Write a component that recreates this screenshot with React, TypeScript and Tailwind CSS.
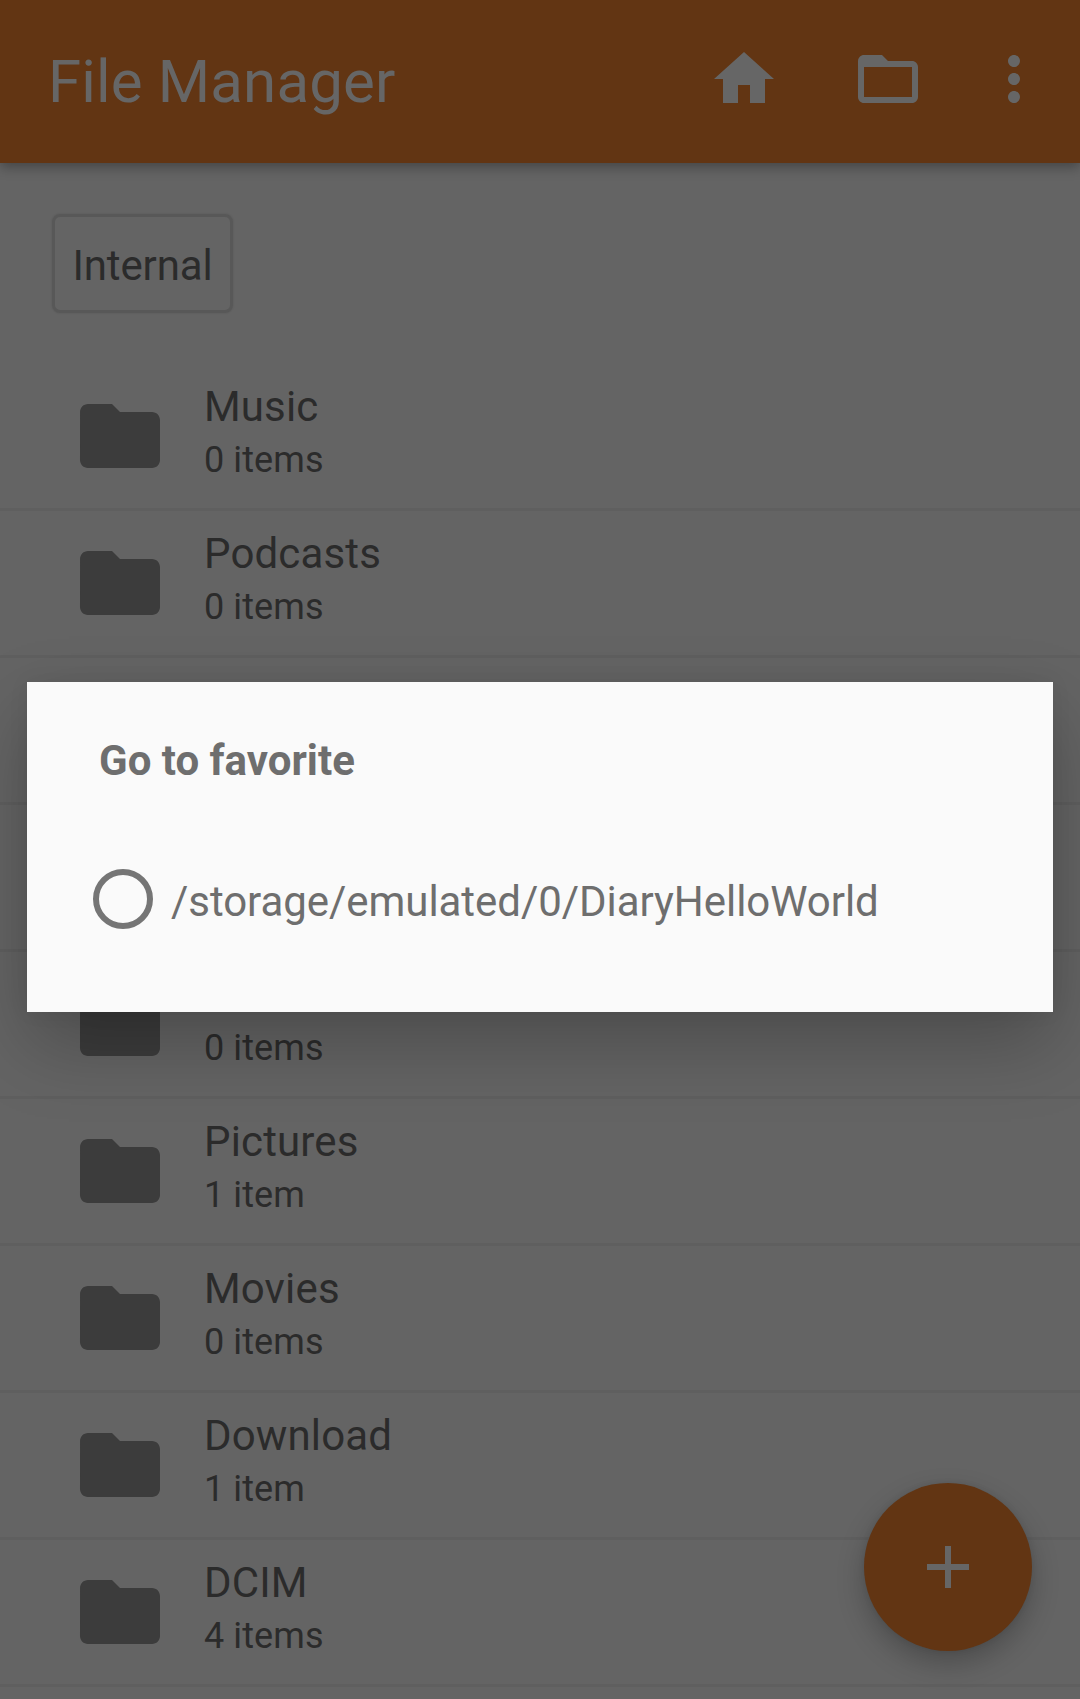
import React from "react";

type Row = { name: string; count: string };

const rows: Row[] = [
  { name: "Music", count: "0 items" },
  { name: "Podcasts", count: "0 items" },
  { name: "", count: "" },
  { name: "", count: "" },
  { name: "", count: "0 items" },
  { name: "Pictures", count: "1 item" },
  { name: "Movies", count: "0 items" },
  { name: "Download", count: "1 item" },
  { name: "DCIM", count: "4 items" },
];

function Icon({ d, className }: { d: string; className: string }) {
  return (
    <svg viewBox="0 0 24 24" fill="currentColor" className={className}>
      <path d={d} />
    </svg>
  );
}

const HOME = "M10 20v-6h4v6h5v-8h3L12 3 2 12h3v8z";
const FOLDER =
  "M10 4H4c-1.1 0-1.99.9-1.99 2L2 18c0 1.1.9 2 2 2h16c1.1 0 2-.9 2-2V8c0-1.1-.9-2-2-2h-8l-2-2z";
const FOLDER_OPEN =
  "M20 6h-8l-2-2H4c-1.1 0-1.99.9-1.99 2L2 18c0 1.1.9 2 2 2h16c1.1 0 2-.9 2-2V8c0-1.1-.9-2-2-2zm0 12H4V8h16v10z";
const MORE =
  "M12 8c1.1 0 2-.9 2-2s-.9-2-2-2-2 .9-2 2 .9 2 2 2zm0 2c-1.1 0-2 .9-2 2s.9 2 2 2 2-.9 2-2-.9-2-2-2zm0 6c-1.1 0-2 .9-2 2s.9 2 2 2 2-.9 2-2-.9-2-2-2z";
const PLUS = "M19 13h-6v6h-2v-6H5v-2h6V5h2v6h6v2z";

function Header() {
  return (
    <header className="relative flex h-[163px] shrink-0 items-start bg-[#623513] pl-12 pr-[30px] pt-[43px] text-[#666666] shadow-[0_4px_12px_rgba(0,0,0,0.32)]">
      <h1 className="mt-[4px] grow text-[60px] leading-[70px] tracking-[0.15px]">File Manager</h1>
      <Icon d={HOME} className="size-[72px]" />
      <Icon d={FOLDER_OPEN} className="ml-[72px] size-[72px]" />
      <Icon d={MORE} className="ml-[54px] size-[72px]" />
    </header>
  );
}

function FolderRow({ name, count }: Row) {
  return (
    <li className="flex h-[147px] shrink-0 items-start border-b-[3px] border-[#5f5f5f] pl-[72px] pt-[18px]">
      <Icon d={FOLDER} className="mt-[6px] size-24 text-[#3c3c3c]" />
      <div className="ml-[36px] text-[#2b2b2b]">
        <p className="h-[57px] text-[42px] leading-[49px] tracking-[0.15px]">{name}</p>
        <p className="text-[36px] leading-[42px] tracking-[0.1px]">{count}</p>
      </div>
    </li>
  );
}

function Dialog() {
  return (
    <div className="absolute inset-0 flex items-start justify-center pt-[682px]">
      <section className="flex h-[330px] w-[1026px] flex-col bg-[#fafafa] pt-[54px] text-[#6e6e6e] shadow-[0_32px_72px_rgba(0,0,0,0.24),0_0_20px_rgba(0,0,0,0.06)]">
        <h2 className="pl-[72px] text-[42px] font-bold leading-[49px]">Go to favorite</h2>
        <label className="mt-[84px] flex items-start pl-[66px]">
          <span className="size-[60px] rounded-full border-[6px] border-[#757575]" />
          <span className="ml-[18px] mt-[8px] text-[42px] leading-[49px] tracking-[-0.05px]">
            /storage/emulated/0/DiaryHelloWorld
          </span>
        </label>
      </section>
    </div>
  );
}

export default function App() {
  return (
    <div className="relative flex h-[1699px] w-[1080px] flex-col overflow-hidden bg-[#646464] font-['Roboto',sans-serif]">
      <Header />
      <div className="flex h-[201px] shrink-0 items-start pl-[52px] pt-[51px]">
        <button className="h-[99px] w-[181px] rounded-[8px] border-[3px] border-[#585858] pt-[3px] text-[42px] leading-[49px] tracking-[-0.12px] text-[#2b2b2b] shadow-[0_0_2px_rgba(0,0,0,0.15)]">
          Internal
        </button>
      </div>
      <ul className="flex flex-col">
        {rows.map((row, i) => (
          <FolderRow key={i} name={row.name} count={row.count} />
        ))}
      </ul>
      <button className="absolute bottom-12 right-12 flex size-[168px] items-center justify-center rounded-full bg-[#623513] text-[#666666] shadow-[0_12px_28px_rgba(0,0,0,0.24),0_0_6px_rgba(0,0,0,0.08)]">
        <Icon d={PLUS} className="size-[72px]" />
      </button>
      <Dialog />
    </div>
  );
}
